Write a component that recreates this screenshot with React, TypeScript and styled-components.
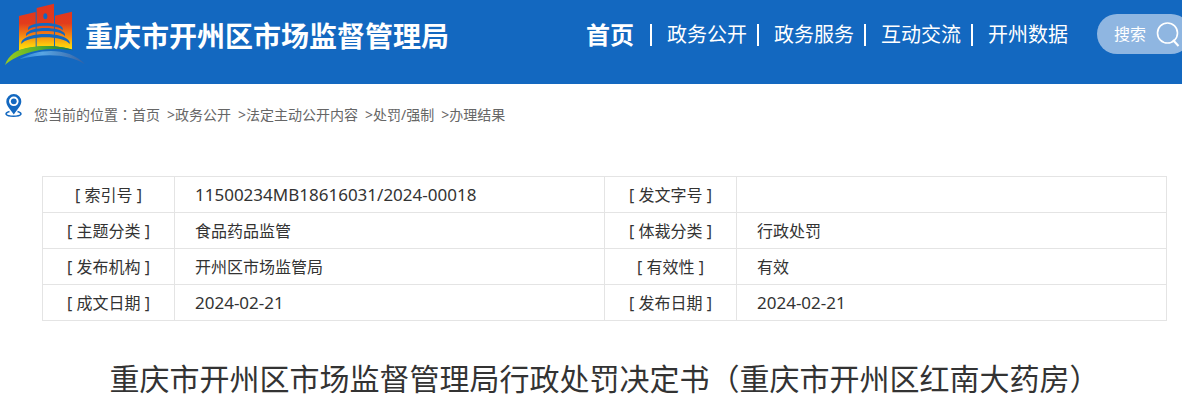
import React from "react";
import styled, { createGlobalStyle } from "styled-components";

const GlobalStyle = createGlobalStyle`
  * { box-sizing: border-box; }
  body {
    margin: 0;
    background: #fff;
    color: #333;
    font-family: "Noto Sans", "Noto Sans CJK SC", sans-serif;
    overflow-x: hidden;
  }
  a { color: inherit; text-decoration: none; }
`;

const Header = styled.header`
  display: flex;
  align-items: flex-start;
  height: 84px;
  background: #1368c0;
  color: #fff;
  overflow: hidden;
`;

const Brand = styled.a`
  display: flex;
  align-items: flex-start;
  flex-shrink: 0;
`;

const LogoSvg = styled.svg`
  display: block;
  width: 85px;
  height: 84px;
`;

const SiteName = styled.span`
  padding-top: 16px;
  font-size: 28px;
  line-height: 40px;
  font-weight: 700;
  white-space: nowrap;
`;

const Nav = styled.nav`
  display: flex;
  align-items: center;
  flex-shrink: 0;
  height: 40px;
  margin: 15px 29px 0 auto;
`;

const NavItem = styled.a<{ $current?: boolean }>`
  display: flex;
  align-items: center;
  padding-right: ${(p) => (p.$current ? 6 : 0)}px;
  font-size: ${(p) => (p.$current ? 24 : 20)}px;
  font-weight: ${(p) => (p.$current ? 700 : 400)};
  line-height: 40px;
  white-space: nowrap;

  &:not(:first-child)::before {
    content: "";
    width: 2px;
    height: 22px;
    margin: 0 15px 0 10px;
    background: #fff;
  }
`;

const Search = styled.form`
  display: flex;
  align-items: center;
  flex-shrink: 0;
  width: 94px;
  height: 40px;
  margin: 14px -9px 0 0;
  padding-left: 17px;
  border-radius: 20px;
  background: #8fb6e1;
`;

const SearchInput = styled.input`
  width: 42px;
  height: 40px;
  padding: 0;
  border: 0;
  outline: 0;
  background: transparent;
  color: #fff;
  font: inherit;
  font-size: 16px;
  &::placeholder { color: #fff; opacity: 1; }
`;

const SearchButton = styled.button`
  display: flex;
  width: 24px;
  height: 26px;
  padding: 0;
  border: 0;
  background: transparent;
`;

const Location = styled.nav`
  display: flex;
  align-items: flex-start;
  gap: 11px;
  padding: 9px 5px 0;
  color: #666;
  font-size: 14px;
  line-height: 20px;
`;

const PinSvg = styled.svg`
  flex-shrink: 0;
  width: 18px;
  height: 26px;
`;

const Crumbs = styled.div`
  display: flex;
  flex-wrap: wrap;
  padding-top: 12px;
`;

const CrumbList = styled.ol`
  display: flex;
  flex-wrap: wrap;
  margin: 0;
  padding: 0;
  list-style: none;
`;

const Crumb = styled.li`
  &:not(:first-child)::before {
    content: ">";
    margin-left: 7px;
  }
`;

const Colon = styled.span`
  font-family: "Noto Sans", "Noto Sans CJK TC", sans-serif;
`;

const Article = styled.main`
  margin: 51px 15px 0 42px;
`;

const InfoTable = styled.table`
  width: 100%;
  table-layout: fixed;
  border-collapse: collapse;
  font-size: 16px;
  line-height: 24px;
`;

const LabelCol = styled.col`
  width: 132px;
`;

const Label = styled.th`
  height: 36px;
  padding: 0;
  border: 1px solid #e4e4e4;
  font-weight: 400;
  text-align: center;
`;

const Value = styled.td<{ $numeric?: boolean }>`
  height: 36px;
  padding: 0 20px;
  border: 1px solid #e4e4e4;
  font-size: ${(p) => (p.$numeric ? 17 : 16)}px;
`;

const Title = styled.h1`
  margin: 36px 0 0;
  font-family: "Noto Sans CJK SC", sans-serif;
  font-size: 30px;
  font-weight: 400;
  line-height: 40px;
  text-align: center;
`;

const navItems = ["首页", "政务公开", "政务服务", "互动交流", "开州数据"];
const crumbs = ["首页", "政务公开", "法定主动公开内容", "处罚/强制", "办理结果"];
const rows = [
  ["索引号", "11500234MB18616031/2024-00018", "发文字号", ""],
  ["主题分类", "食品药品监管", "体裁分类", "行政处罚"],
  ["发布机构", "开州区市场监管局", "有效性", "有效"],
  ["成文日期", "2024-02-21", "发布日期", "2024-02-21"],
];
const isNumeric = (text: string) => /^\d/.test(text);

function Logo() {
  return (
    <LogoSvg viewBox="0 0 255 252" aria-hidden="true">
      <defs>
        <linearGradient id="wall" gradientUnits="userSpaceOnUse" x1="0" y1="12" x2="0" y2="150">
          <stop offset="0" stopColor="#e0351f" />
          <stop offset=".42" stopColor="#e23c1c" />
          <stop offset=".7" stopColor="#f48a12" />
          <stop offset=".88" stopColor="#fcc60c" />
          <stop offset="1" stopColor="#ffe010" />
        </linearGradient>
        <linearGradient id="hill" x1="0" x2="1">
          <stop offset="0" stopColor="#9ccb1e" />
          <stop offset=".5" stopColor="#55b02c" />
          <stop offset="1" stopColor="#15753f" />
        </linearGradient>
        <linearGradient id="river" x1="0" x2="1">
          <stop offset="0" stopColor="#2c86d8" />
          <stop offset=".35" stopColor="#58a6e4" />
          <stop offset="1" stopColor="#3760a0" />
        </linearGradient>
      </defs>
      <g fill="url(#wall)">
        <path d="M57 48 107 36V141Q80 144 57 151Z" />
        <path d="M110 24 162 11V139Q136 137 110 140Z" />
        <path d="M165 47 216 35V148Q190 142 165 139Z" />
      </g>
      <g fill="#1368c0">
        <ellipse cx="136" cy="49" rx="6" ry="9" />
        <path d="M84 84C92 64 178 64 188 84V91C176 73 96 73 84 91Z" />
        <path d="M78 102C88 78 184 78 195 102V109C182 88 91 88 78 109Z" />
        <path d="M64 126C78 94 195 94 209 126V132C190 105 83 105 64 132Z" />
      </g>
      <path fill="url(#hill)" d="M15 195C26 165 50 148 90 142C140 134 190 138 220 151C160 143 115 147 76 161C48 171 28 182 15 195Z" />
      <path fill="url(#river)" d="M58 178C110 146 205 138 255 193C205 160 130 160 58 178Z" />
    </LogoSvg>
  );
}

export default function App() {
  return (
    <>
      <GlobalStyle />
      <Header>
        <Brand href="#">
          <Logo />
          <SiteName>重庆市开州区市场监督管理局</SiteName>
        </Brand>
        <Nav aria-label="主导航">
          {navItems.map((item, i) => (
            <NavItem key={item} href="#" $current={i === 0}>{item}</NavItem>
          ))}
        </Nav>
        <Search role="search" onSubmit={(e) => e.preventDefault()}>
          <SearchInput type="text" placeholder="搜索" aria-label="搜索" />
          <SearchButton type="submit" aria-label="搜索">
            <svg width="24" height="26" viewBox="0 0 24 26" fill="none" stroke="#fff" strokeWidth="1.6">
              <circle cx="11.5" cy="12" r="10" />
              <path d="M17 19 22.5 25" strokeWidth="2" />
            </svg>
          </SearchButton>
        </Search>
      </Header>
      <Location aria-label="当前位置">
        <PinSvg viewBox="0 0 18 26" aria-hidden="true">
          <path fill="none" stroke="#1368c0" strokeWidth="1.5" d="M4.5 18.6C-1 20 0 23.3 8.5 23.3S18 20 12.5 18.6" />
          <path fill="#1368c0" fillRule="evenodd" d="M8.8 1A7.5 7.5 0 0 0 1.3 8.5C1.3 12.5 5 16 8.8 21.5C12.6 16 16.3 12.5 16.3 8.5A7.5 7.5 0 0 0 8.8 1ZM8.8 3.5A4.8 4.8 0 1 1 8.8 13.1A4.8 4.8 0 0 1 8.8 3.5Z" />
          <circle cx="8.8" cy="8.3" r="2.9" fill="#1368c0" />
        </PinSvg>
        <Crumbs>
          <span>您当前的位置<Colon>：</Colon></span>
          <CrumbList>
            {crumbs.map((crumb) => (
              <Crumb key={crumb}><a href="#">{crumb}</a></Crumb>
            ))}
          </CrumbList>
        </Crumbs>
      </Location>
      <Article>
        <InfoTable>
          <colgroup>
            <LabelCol />
            <col />
            <LabelCol />
            <col />
          </colgroup>
          <tbody>
            {rows.map(([labelA, valueA, labelB, valueB]) => (
              <tr key={labelA}>
                <Label scope="row">[ {labelA} ]</Label>
                <Value $numeric={isNumeric(valueA)}>{valueA}</Value>
                <Label scope="row">[ {labelB} ]</Label>
                <Value $numeric={isNumeric(valueB)}>{valueB}</Value>
              </tr>
            ))}
          </tbody>
        </InfoTable>
        <Title>重庆市开州区市场监督管理局行政处罚决定书（重庆市开州区红南大药房）</Title>
      </Article>
    </>
  );
}
